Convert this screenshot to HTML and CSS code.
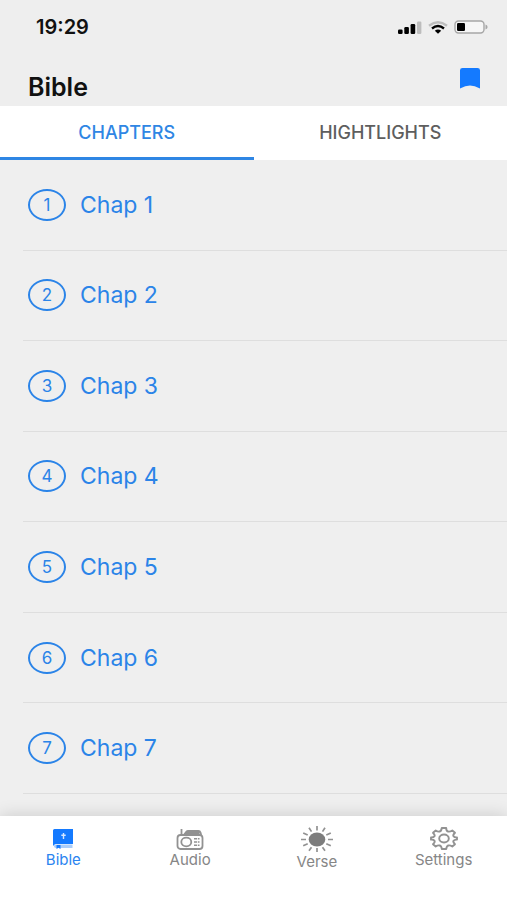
FILE: index.html
```html
<!DOCTYPE html>
<html lang="en">
<head>
<meta charset="utf-8">
<meta name="viewport" content="width=device-width, initial-scale=1">
<title>Bible</title>
<link rel="stylesheet" href="styles.css">
</head>
<body>
<div class="app">
  <header class="header">
    <div class="status">
      <span class="time">19:29</span>
      <div class="status-icons">
        <svg width="24" height="13" viewBox="0 0 24 13" aria-hidden="true">
          <rect x="0" y="8.500" width="4.600" height="4.500" rx="1.200"/>
          <rect x="6.300" y="6" width="4.600" height="7" rx="1.200"/>
          <rect x="12.600" y="3" width="4.600" height="10" rx="1.200"/>
          <rect x="19" y="0.500" width="4.400" height="12.500" rx="1.200" fill="#bdbdbd"/>
        </svg>
        <svg width="20" height="13" viewBox="0 0 20 13" fill="none" stroke-width="2.400" aria-hidden="true">
          <path d="M1 4.700Q10-2 19 4.700" stroke="#bdbdbd"/>
          <path d="M4 7.500Q10 2.700 16 7.500" stroke="#000"/>
          <path d="M6.800 9.800Q10 7.200 13.200 9.800L10 12.800Z" fill="#000"/>
        </svg>
        <svg width="34" height="14" viewBox="0 0 34 14" aria-hidden="true">
          <rect x="1" y="1" width="29" height="12" rx="3.500" fill="#f6f6f6" stroke="#a6a6a6" stroke-width="1.400"/>
          <rect x="3" y="3" width="8" height="8" rx="1.200"/>
          <path d="M31.500 4.500Q33.600 5.300 33.600 7T31.500 9.500Z" fill="#a6a6a6"/>
        </svg>
      </div>
    </div>
    <div class="title-row">
      <h1 class="title">Bible</h1>
      <button class="bookmark" type="button" aria-label="Bookmarks">
        <svg width="20" height="22" viewBox="0 0 20 22" aria-hidden="true"><path d="M2.500 1H17.500Q20 1 20 3.200V21.500Q14.500 18.500 10 18.500T0 21.500V3.200Q0 1 2.500 1Z" fill="#147aff"/></svg>
      </button>
    </div>
  </header>

  <div class="tabs" role="tablist">
    <button class="tab tab-active" type="button" role="tab" aria-selected="true">CHAPTERS</button>
    <button class="tab" type="button" role="tab" aria-selected="false">HIGHTLIGHTS</button>
  </div>

  <main class="content">
    <ul class="chapters">
      <li class="row"><a class="chapter" href="#1"><span class="number">1</span><span>Chap 1</span></a></li>
      <li class="row"><a class="chapter" href="#2"><span class="number">2</span><span>Chap 2</span></a></li>
      <li class="row"><a class="chapter" href="#3"><span class="number">3</span><span>Chap 3</span></a></li>
      <li class="row"><a class="chapter" href="#4"><span class="number">4</span><span>Chap 4</span></a></li>
      <li class="row"><a class="chapter" href="#5"><span class="number">5</span><span>Chap 5</span></a></li>
      <li class="row"><a class="chapter" href="#6"><span class="number">6</span><span>Chap 6</span></a></li>
      <li class="row"><a class="chapter" href="#7"><span class="number">7</span><span>Chap 7</span></a></li>
    </ul>
  </main>

  <nav class="nav">
    <a class="nav-item nav-active" href="#bible">
      <svg width="20" height="24" viewBox="0 0 20 24" aria-hidden="true">
        <path d="M1.500 3H20V18H3Q1 18 1 19.500H0V4.500Q0 3 1.500 3Z" fill="#147aff"/>
        <path d="M3 18.500H19.500V22H3Q1 22 1 20.200T3 18.500Z" fill="#a9cdfb"/>
        <path d="M3.500 19H7.500V23L5.500 21.800L3.500 23Z" fill="#147aff"/>
        <path d="M10.500 7V13M8.300 9.200H12.700" stroke="#d5e7ff" stroke-width="1.400" fill="none"/>
      </svg>
      <span>Bible</span>
    </a>
    <a class="nav-item" href="#audio">
      <svg width="28" height="24" viewBox="0 0 28 24" fill="none" stroke="#929292" stroke-width="1.800" aria-hidden="true">
        <rect x="1.500" y="9" width="25" height="14" rx="3"/>
        <path d="M5.500 9V3M8 8.800L10.500 5.600Q11 5 12 5H22.500Q24 5 24.500 6.500L25.200 9M10.500 7H23.500"/>
        <ellipse cx="10.300" cy="16" rx="5" ry="4.300"/>
        <path d="M18 12.800H23.500M18 16H23.500M18 19.200H23.500" stroke-width="1.500" stroke-dasharray="3.200 .8"/>
      </svg>
      <span>Audio</span>
    </a>
    <a class="nav-item nav-verse" href="#verse">
      <svg width="32" height="26" viewBox="0 0 32 26" aria-hidden="true">
        <ellipse cx="16" cy="13.500" rx="8.300" ry="7" fill="#7d7d7d"/>
        <path d="M16 0V4.500M16 22V26M0 13.500H5M27 13.500H32M8 1.700L10.500 5.600M24 1.700L21.500 5.600M8 24.800L10.500 21.200M24 24.800L21.500 21.200M2.200 6.900L6.700 9.100M29.800 6.900L25.300 9.100M2.200 19.800L6.700 17.800M29.800 19.800L25.300 17.800" stroke="#929292" stroke-width="1.700"/>
      </svg>
      <span>Verse</span>
    </a>
    <a class="nav-item" href="#settings">
      <svg width="28" height="24" viewBox="0 0 28 24" fill="none" stroke="#929292" stroke-width="1.900" stroke-linejoin="round" aria-hidden="true">
        <path d="M11.800 2H16.200Q16.200 5 18 5.500T22.300 4.500L25 6.800Q22.600 9 23.500 10.300T27 11.400V13.600Q24.300 13.500 23.500 14.700T25 18.200L22.300 20.500Q20 19 18.300 19.500T16.200 23H11.800Q11.500 20 9.700 19.500T5.700 20.500L3 18.200Q5.300 16 4.500 14.700T1 13.600V11.400Q3.700 11.500 4.500 10.300T3 6.800L5.700 4.500Q8 6 9.700 5.500T11.800 2Z"/>
        <ellipse cx="14" cy="12.500" rx="4.800" ry="4"/>
      </svg>
      <span>Settings</span>
    </a>
  </nav>
</div>
</body>
</html>
```
FILE: styles.css
```css
* { box-sizing: border-box; }

body {
  margin: 0;
  background: #efefef;
  font-family: Inter, "Liberation Sans", sans-serif;
}

a { color: inherit; text-decoration: none; }

button {
  border: 0;
  padding: 0;
  background: none;
  font: inherit;
  cursor: pointer;
}

svg { display: block; }

.app {
  display: flex;
  flex-direction: column;
  min-height: 100vh;
}

.header { background: #eee; }

.status {
  display: flex;
  align-items: center;
  justify-content: space-between;
  padding: 15px 19px 0 36px;
}

.time {
  color: #111;
  font-size: 20px;
  font-weight: 600;
  line-height: 24px;
}

.status-icons {
  display: flex;
  align-items: center;
  gap: 6px;
}

.title-row {
  display: flex;
  justify-content: space-between;
  align-items: flex-start;
  padding: 28px 27px 3px 28px;
}

.title {
  margin: 0;
  padding-top: 4px;
  color: #111;
  font-size: 25px;
  font-weight: 600;
  line-height: 32px;
}

.tabs {
  display: grid;
  grid-template-columns: 1fr 1fr;
  background: #fff;
}

.tab {
  border-top: 3px solid transparent;
  border-bottom: 3px solid transparent;
  color: #5e5e5e;
  font-size: 18px;
  font-weight: 500;
  line-height: 48px;
}

.tab-active {
  border-bottom-color: #2f86e4;
  color: #2f86e4;
}

.content {
  display: flex;
  flex: 1;
  padding-bottom: 22px;
}

.chapters {
  display: grid;
  flex: 1;
  grid-auto-rows: 1fr;
  margin: 0;
  padding: 0 0 0 23px;
  list-style: none;
}

.row {
  display: flex;
  border-bottom: 1px solid #dedede;
}

.chapter {
  display: flex;
  flex: 1;
  align-items: center;
  gap: 14px;
  padding: 16px 5px;
  color: #2b84e8;
  font-size: 23px;
  line-height: 32px;
}

.number {
  width: 38px;
  border: 2px solid #2b84e8;
  border-radius: 50%;
  font-size: 17px;
  line-height: 28px;
  text-align: center;
}

.nav {
  display: grid;
  grid-template-columns: repeat(4, 1fr);
  padding: 10px 0 28px;
  background: #fff;
  box-shadow: 0 0 16px rgba(0, 0, 0, 0.16);
}

.nav-item {
  display: flex;
  flex-direction: column;
  align-items: center;
  color: #868686;
  font-size: 15px;
  line-height: 20px;
}

.nav-active { color: #2b84f0; }
```
